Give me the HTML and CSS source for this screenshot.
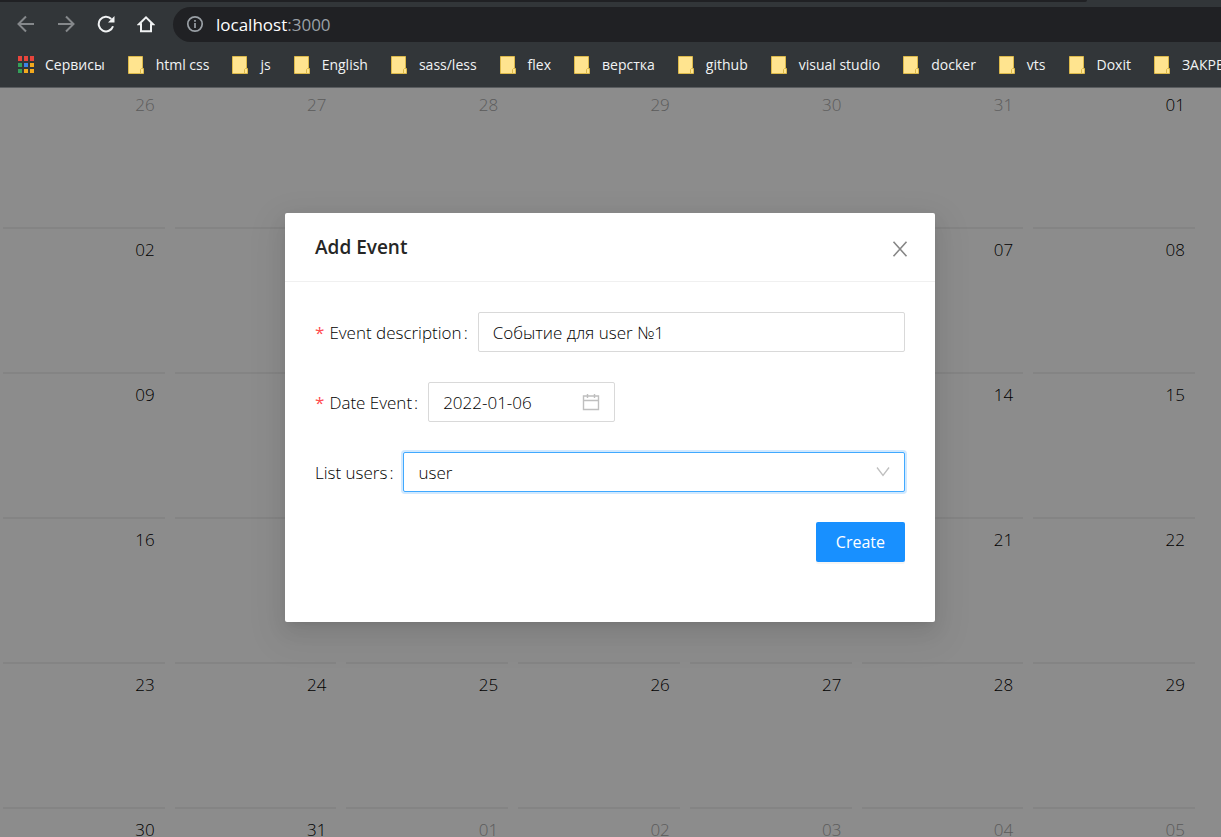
FILE: index.html
```html
<!DOCTYPE html>
<html lang="ru">
<head>
<meta charset="utf-8">
<title>Calendar</title>
<link rel="stylesheet" href="styles.css">
</head>
<body>
<header class="browser">
  <div class="tabstrip"><div class="tabstrip-edge"></div></div>
  <div class="toolbar">
    <button class="nav-btn nav-dim" aria-label="Back"><svg viewBox="0 0 18 18"><path d="M17 9H2M9 1.500L1.500 9L9 16.500"/></svg></button>
    <button class="nav-btn nav-dim" aria-label="Forward"><svg viewBox="0 0 18 18"><path d="M1 9H16M9 1.500L16.500 9L9 16.500"/></svg></button>
    <button class="nav-btn" aria-label="Reload"><svg viewBox="0 0 18 18"><path d="M16 11.200A7.300 7.300 0 1 1 14.300 4"/><path class="solid" d="M17.500 1V7.500H11Z"/></svg></button>
    <button class="nav-btn" aria-label="Home"><svg viewBox="0 0 18 18"><path d="M2 9.200H4V16.200H14V9.200H16L9 2.400Z"/></svg></button>
    <div class="address">
      <svg class="info" viewBox="0 0 18 18"><circle cx="9" cy="9" r="7.200"/><path d="M9 8V13M9 5V6.700"/></svg>
      <span><span class="host">localhost</span>:3000</span>
    </div>
  </div>
  <nav class="bookmarks">
    <a href="#" class="bookmark apps"><svg viewBox="0 0 18 18"><path fill="#e8453c" d="M1 0h4v5H1zM7 0h4v5H7zM13 0h4v5h-4z"/><path fill="#34a05a" d="M1 7h4v4H1zM1 13h4v4H1z"/><path fill="#3b82e8" d="M7 7h4v4H7z"/><path fill="#f2a91e" d="M13 7h4v4h-4zM7 13h4v4H7zM13 13h4v4h-4z"/></svg>Сервисы</a>
    <a href="#" class="bookmark"><svg viewBox="0 0 16 18"><use href="#folder"/></svg>html css</a>
    <a href="#" class="bookmark"><svg viewBox="0 0 16 18"><use href="#folder"/></svg>js</a>
    <a href="#" class="bookmark"><svg viewBox="0 0 16 18"><use href="#folder"/></svg>English</a>
    <a href="#" class="bookmark"><svg viewBox="0 0 16 18"><use href="#folder"/></svg>sass/less</a>
    <a href="#" class="bookmark"><svg viewBox="0 0 16 18"><use href="#folder"/></svg>flex</a>
    <a href="#" class="bookmark"><svg viewBox="0 0 16 18"><use href="#folder"/></svg>верстка</a>
    <a href="#" class="bookmark"><svg viewBox="0 0 16 18"><use href="#folder"/></svg>github</a>
    <a href="#" class="bookmark"><svg viewBox="0 0 16 18"><use href="#folder"/></svg>visual studio</a>
    <a href="#" class="bookmark"><svg viewBox="0 0 16 18"><use href="#folder"/></svg>docker</a>
    <a href="#" class="bookmark"><svg viewBox="0 0 16 18"><use href="#folder"/></svg>vts</a>
    <a href="#" class="bookmark"><svg viewBox="0 0 16 18"><use href="#folder"/></svg>Doxit</a>
    <a href="#" class="bookmark"><svg viewBox="0 0 16 18"><use href="#folder"/></svg>ЗАКРЕП</a>
  </nav>
</header>
<svg class="defs" aria-hidden="true"><defs><g id="folder"><path fill="#ffe48f" stroke="#dcb94a" d="M.500 .500H14.500V17.500H.500Z"/><path fill="#ffe48f" stroke="#dcb94a" d="M12.500 17.500V13.500L13.500 12.500H15.500V17.500Z"/></g></defs></svg>

<div class="page">
  <main>
    <table class="calendar">
      <tbody>
        <tr><td class="other"><div class="day">26</div></td><td class="other"><div class="day">27</div></td><td class="other"><div class="day">28</div></td><td class="other"><div class="day">29</div></td><td class="other"><div class="day">30</div></td><td class="other"><div class="day">31</div></td><td><div class="day">01</div></td></tr>
        <tr><td><div class="day">02</div></td><td><div class="day"></div></td><td><div class="day"></div></td><td><div class="day"></div></td><td><div class="day"></div></td><td><div class="day">07</div></td><td><div class="day">08</div></td></tr>
        <tr><td><div class="day">09</div></td><td><div class="day"></div></td><td><div class="day"></div></td><td><div class="day"></div></td><td><div class="day"></div></td><td><div class="day">14</div></td><td><div class="day">15</div></td></tr>
        <tr><td><div class="day">16</div></td><td><div class="day"></div></td><td><div class="day"></div></td><td><div class="day"></div></td><td><div class="day"></div></td><td><div class="day">21</div></td><td><div class="day">22</div></td></tr>
        <tr><td><div class="day">23</div></td><td><div class="day">24</div></td><td><div class="day">25</div></td><td><div class="day">26</div></td><td><div class="day">27</div></td><td><div class="day">28</div></td><td><div class="day">29</div></td></tr>
        <tr><td><div class="day">30</div></td><td><div class="day">31</div></td><td class="other"><div class="day">01</div></td><td class="other"><div class="day">02</div></td><td class="other"><div class="day">03</div></td><td class="other"><div class="day">04</div></td><td class="other"><div class="day">05</div></td></tr>
      </tbody>
    </table>
  </main>

  <div class="mask">
    <section class="modal" role="dialog" aria-labelledby="modal-title">
      <div class="modal-head">
        <h1 class="modal-title" id="modal-title">Add Event</h1>
        <button class="close" aria-label="Close"><svg viewBox="0 0 16 16"><path d="M1.500 .800L14.500 15.200M14.500 .800L1.500 15.200"/></svg></button>
      </div>
      <form class="form">
        <div class="row">
          <label class="label required" for="description">Event description</label>
          <input class="field grow" id="description" type="text" value="Событие для user №1">
        </div>
        <div class="row">
          <label class="label required" for="date">Date Event</label>
          <div class="field picker">
            <input class="picker-input" id="date" type="text" value="2022-01-06">
            <svg class="calendar-icon" viewBox="0 0 18 18"><path d="M1.500 3H16.500V16.500H1.500ZM1.500 7.500H16.500M5.500 1V5M12.500 1V5"/></svg>
          </div>
        </div>
        <div class="row">
          <label class="label" for="users">List users</label>
          <div class="select-wrap grow">
            <select class="field select" id="users"><option>user</option></select>
            <svg class="chevron" viewBox="0 0 14 10"><path d="M1 .500L7 8.500L13 .500"/></svg>
          </div>
        </div>
        <div class="row actions"><button class="primary" type="button">Create</button></div>
      </form>
    </section>
  </div>
</div>
</body>
</html>
```
FILE: styles.css
```css
* { box-sizing: border-box; }

body {
  margin: 0;
  height: 100vh;
  display: flex;
  flex-direction: column;
  overflow: hidden;
  font-family: "Open Sans", "Noto Sans", sans-serif;
  font-size: 17px;
  font-weight: 300;
  color: #000;
}

button, input, select { font: inherit; color: inherit; }

.defs { position: absolute; width: 0; height: 0; }

.browser {
  flex: none;
  background: #323639;
  border-bottom: 1px solid #5a5d60;
  overflow: hidden;
  font-weight: 400;
}

.tabstrip { height: 2px; }
.tabstrip-edge {
  width: 89%;
  height: 2px;
  background: #202124;
  border-bottom-right-radius: 4px;
}

.toolbar {
  height: 44px;
  padding-left: 16px;
  display: flex;
  align-items: center;
}

.nav-btn {
  width: 20px;
  height: 20px;
  margin-right: 20px;
  padding: 1px;
  border: 0;
  background: none;
  color: #f1f3f4;
}
.nav-btn svg {
  display: block;
  fill: none;
  stroke: currentColor;
  stroke-width: 2;
}
.nav-btn .solid { fill: currentColor; stroke: none; }
.nav-dim { color: #85888b; }

.address {
  flex: 1;
  height: 35px;
  margin-left: -3px;
  padding-left: 13px;
  display: flex;
  align-items: center;
  gap: 12px;
  background: #202124;
  border-radius: 18px 0 0 18px;
  color: #9aa0a6;
}
.info {
  width: 18px;
  height: 18px;
  fill: none;
  stroke: #9aa0a6;
  stroke-width: 1.700;
}
.host { color: #fff; }

.bookmarks {
  height: 41px;
  padding: 0 0 4px 17px;
  display: flex;
  align-items: center;
  gap: 23px;
}
.bookmark {
  flex: none;
  display: flex;
  align-items: center;
  gap: 12px;
  color: #f1f3f4;
  font-size: 14px;
  text-decoration: none;
}
.bookmark svg { width: 16px; height: 18px; }
.apps { gap: 10px; }
.apps svg { width: 18px; }

.page {
  flex: 1;
  position: relative;
  min-height: 0;
  overflow: hidden;
  background: #fff;
}

.calendar {
  width: calc(100% - 19px);
  margin-left: 3px;
  border-spacing: 0;
  table-layout: fixed;
}
.calendar td { padding: 0 10px 0 0; }
.day {
  height: 145px;
  padding: 9px 10px 0 0;
  border-top: 2px solid #f0f0f0;
  line-height: 24px;
  text-align: right;
}
.calendar tr:first-child .day {
  height: 139px;
  padding-top: 5px;
  border-top: 0;
}
.other .day { color: #a8a8a8; }

.mask {
  position: absolute;
  inset: 0;
  padding: 125px 1px 0 0;
  display: flex;
  justify-content: center;
  align-items: flex-start;
  background: rgba(0, 0, 0, 0.45);
}

.modal {
  width: 650px;
  max-width: 100%;
  background: #fff;
  border-radius: 2px;
  box-shadow: 0 4px 8px -5px rgba(0, 0, 0, 0.12), 0 8px 20px rgba(0, 0, 0, 0.08), 0 12px 35px 10px rgba(0, 0, 0, 0.05);
}
.modal-head {
  padding: 20px 26px 20px 30px;
  display: flex;
  justify-content: space-between;
  align-items: center;
  border-bottom: 1px solid #f0f0f0;
}
.modal-title {
  margin: 0;
  color: #262626;
  font-size: 19px;
  line-height: 28px;
  font-weight: 600;
}
.close {
  width: 18px;
  height: 20px;
  margin-top: 4px;
  padding: 2px 1px;
  border: 0;
  background: none;
  color: #868686;
}
.close svg {
  display: block;
  width: 16px;
  height: 16px;
  fill: none;
  stroke: currentColor;
  stroke-width: 1.600;
}

.form {
  padding: 30px 30px 60px;
  display: flex;
  flex-direction: column;
  gap: 30px;
}
.row { display: flex; align-items: center; }
.label { flex: none; margin-right: 10px; }
.label::after { content: ":"; margin-left: 2px; }
.required::before {
  content: "*";
  margin-right: 5px;
  color: #ff4d4f;
  font-weight: 400;
}
.grow { flex: 1; min-width: 0; }

.field {
  height: 40px;
  padding: 0 14px;
  border: 1px solid #d9d9d9;
  border-radius: 2px;
  background: #fff;
  outline: 0;
}
.picker {
  width: 187px;
  display: flex;
  align-items: center;
}
.picker-input {
  flex: 1;
  min-width: 0;
  padding: 0;
  border: 0;
  outline: 0;
}
.calendar-icon {
  width: 18px;
  height: 18px;
  fill: none;
  stroke: #bfbfbf;
  stroke-width: 1.400;
}

.select-wrap { position: relative; }
.select {
  display: block;
  width: 100%;
  appearance: none;
  border-color: #40a9ff;
  box-shadow: 0 0 0 2px rgba(24, 144, 255, 0.2);
}
.chevron {
  position: absolute;
  top: 15px;
  right: 15px;
  width: 14px;
  height: 10px;
  fill: none;
  stroke: #bfbfbf;
  stroke-width: 1.300;
}

.actions { justify-content: flex-end; }
.primary {
  height: 40px;
  padding: 0 20px;
  border: 0;
  border-radius: 2px;
  background: #1890ff;
  color: #fff;
  font-weight: 400;
  font-size: 16px;
  box-shadow: 0 2px 0 rgba(0, 0, 0, 0.04);
}
```
